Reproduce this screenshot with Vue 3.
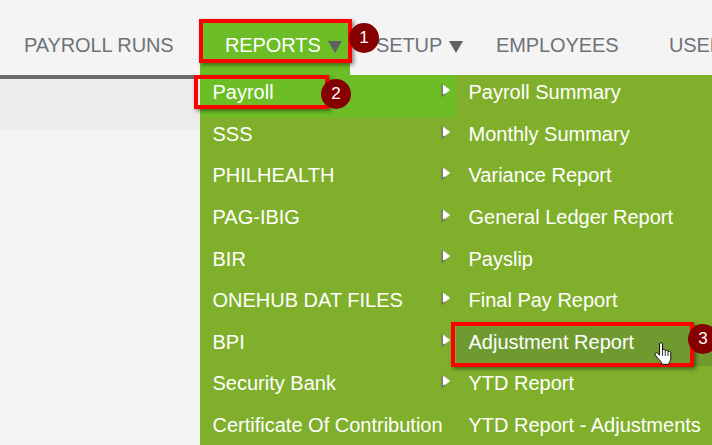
<script setup>
const left = [
  { label: 'Payroll', arrow: true, active: true },
  { label: 'SSS', arrow: true },
  { label: 'PHILHEALTH', arrow: true },
  { label: 'PAG-IBIG', arrow: true },
  { label: 'BIR', arrow: true },
  { label: 'ONEHUB DAT FILES', arrow: true },
  { label: 'BPI', arrow: true },
  { label: 'Security Bank', arrow: true },
  { label: 'Certificate Of Contribution', arrow: false }
]
const right = [
  { label: 'Payroll Summary' },
  { label: 'Monthly Summary' },
  { label: 'Variance Report' },
  { label: 'General Ledger Report' },
  { label: 'Payslip' },
  { label: 'Final Pay Report' },
  { label: 'Adjustment Report', hover: true },
  { label: 'YTD Report' },
  { label: 'YTD Report - Adjustments' }
]
</script>

<template>
  <div class="page">
    <header class="nav">
      <a class="item runs">PAYROLL RUNS</a>
      <a class="item reports">REPORTS<span class="caret"></span></a>
      <a class="item setup">SETUP<span class="caret"></span></a>
      <a class="item employees">EMPLOYEES</a>
      <a class="item users">USERS</a>
    </header>
    <div class="subbar"></div>

    <div class="menu">
      <ul class="col">
        <li v-for="r in left" :key="r.label" class="row" :class="{ active: r.active }">
          <span>{{ r.label }}</span>
          <svg v-if="r.arrow" class="arrow" width="10" height="14" viewBox="0 0 10 14">
            <path d="M1.500 1.500 L8.800 7 L1.500 12.500 Z" fill="#fff" stroke="#e8e8e8" stroke-width="1" stroke-linejoin="round" />
            <path d="M1.200 1 V13 L4 11" fill="none" stroke="#6e6e6e" stroke-width="1.400" />
          </svg>
        </li>
      </ul>
      <ul class="col">
        <li v-for="r in right" :key="r.label" class="row" :class="{ hover: r.hover }">
          <span>{{ r.label }}</span>
        </li>
      </ul>
    </div>

    <div class="box box1"></div>
    <div class="box box2"></div>
    <div class="box box3"></div>
    <div class="badge b1">1</div>
    <div class="badge b2">2</div>
    <div class="badge b3">3</div>
    <svg class="hand" width="19" height="23" viewBox="0 0 19 23">
      <path d="M5.500 2c0-1.900 3-1.900 3 0v6.500c0-1.500 2.800-1.500 2.800 0v.8c0-1.400 2.700-1.400 2.700 0v.9c0-1.300 2.800-1.200 2.800.4v5.400c0 2-.8 3-1.500 4.300v2H7.500v-1.900C5.500 18 3 15.500 1.200 13c-1.100-1.700.9-3 2.300-1.800l2 1.900Z" fill="#fff" stroke="#111" stroke-width="1" stroke-linejoin="round" />
      <path d="M8.500 8.500v5.500M11.300 9.300v4.700M14 10.200v3.800" stroke="#333" stroke-width="1" fill="none" />
    </svg>
  </div>
</template>

<style>
html, body { margin: 0; padding: 0; }
</style>

<style scoped>
.page {
  position: relative;
  width: 712px;
  height: 445px;
  overflow: hidden;
  background: #f4f4f4;
  font-family: "Liberation Sans", Arial, sans-serif;
}
.nav {
  display: flex;
  height: 75px;
  border-bottom: 4px solid #6c6c6c;
  white-space: nowrap;
  overflow: hidden;
}
.item {
  display: flex;
  align-items: center;
  padding-top: 15px;
  box-sizing: border-box;
  font-size: 20px;
  letter-spacing: -0.1px;
  color: #6d7278;
  height: 75px;
  flex: none;
}
.runs { margin-left: 24px; width: 176px; }
.reports {
  width: 176px;
  background: linear-gradient(#6cbd26, #6cbd26) 0 19px / 150px 56px no-repeat;
  color: #fff;
  padding-left: 25px;
}
.setup { width: 120px; }
.employees { width: 173px; }
.caret {
  display: inline-block;
  margin-left: 7px;
  margin-top: 3px;
  border-left: 7px solid transparent;
  border-right: 7px solid transparent;
  border-top: 12px solid #5f6163;
}
.subbar {
  width: 200px;
  height: 51px;
  background: #ececec;
}
.menu {
  position: absolute;
  left: 200px;
  top: 75px;
  display: flex;
  width: 512px;
  height: 370px;
  background: #80b02b;
}
.col {
  list-style: none;
  margin: 0;
  padding: 0;
  width: 256px;
}
.row {
  position: relative;
  height: 41.600px;
  display: flex;
  align-items: center;
  padding-left: 12.500px;
  padding-bottom: 6px;
  box-sizing: border-box;
  font-size: 20px;
  color: #fff;
  white-space: nowrap;
}
.active { background: #6cbd26; }
.hover { background: #6f9a2f; }
.arrow {
  position: absolute;
  left: 241px;
  top: 8px;
}
.box {
  position: absolute;
  box-sizing: border-box;
  border: 4px solid #ff0000;
  box-shadow: 2px 2px 4px rgba(0, 0, 0, .45);
}
.box1 { left: 199px; top: 19px; width: 153px; height: 44px; }
.box2 { left: 194px; top: 75px; width: 135px; height: 34px; }
.box3 { left: 451px; top: 322px; width: 243px; height: 45px; }
.badge {
  position: absolute;
  width: 30px;
  height: 30px;
  border-radius: 50%;
  background: #850000;
  color: #fff;
  display: flex;
  align-items: center;
  justify-content: center;
  font-size: 17px;
}
.b1 { left: 349px; top: 23px; }
.b2 { left: 321px; top: 79px; }
.b3 { left: 688px; top: 324px; }
.hand { position: absolute; left: 654px; top: 342px; }
</style>
